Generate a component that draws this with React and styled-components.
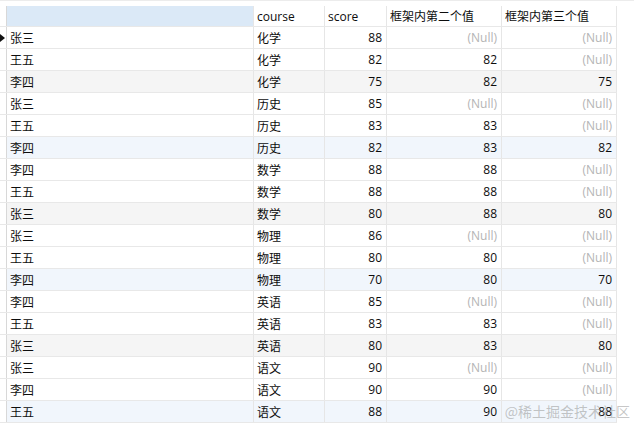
import React from "react";
import styled, { createGlobalStyle } from "styled-components";

const Global = createGlobalStyle`
  html, body { margin: 0; padding: 0; background: #ffffff; }
  body { font-family: "Open Sans", "Noto Sans CJK SC", sans-serif; }
`;

const COLS = "7px 247px 71px 62px 115px 115px";

const Page = styled.div`
  position: relative;
  width: 634px;
  height: 426px;
  overflow: hidden;
  background: #ffffff;
`;

const TopBand = styled.div`
  height: 5px;
  border-top: 1px solid #ececec;
  background: #ffffff;
`;

const Grid = styled.div`
  display: flex;
  flex-direction: column;
  width: 617px;
`;

const Row = styled.div`
  display: grid;
  grid-template-columns: ${COLS};
  height: ${(p) => (p.$header ? 21 : 22)}px;
  box-sizing: border-box;
  border-bottom: 1px solid #e8e8e8;
  background: ${(p) => p.$bg || "#ffffff"};
`;

const Cell = styled.div`
  box-sizing: border-box;
  border-right: 1px solid #e6e6e6;
  padding: 0 4px 0 3px;
  display: flex;
  align-items: center;
  justify-content: ${(p) => (p.$right ? "flex-end" : "flex-start")};
  font-family: "Open Sans", "Noto Sans CJK SC", sans-serif;
  font-size: 12px;
  color: ${(p) => (p.$null ? "#b4b4b4" : "#0d0d0d")};
  background: ${(p) => p.$bg || "transparent"};
  white-space: nowrap;
  overflow: hidden;
`;

const Gutter = styled.div`
  position: relative;
  box-sizing: border-box;
  border-right: 1px solid #d8d8d8;
  background: #ffffff;
`;

const Marker = styled.div`
  position: absolute;
  left: 0;
  top: 7px;
  width: 0;
  height: 0;
  border-top: 4px solid transparent;
  border-bottom: 4px solid transparent;
  border-left: 5px solid #111;
`;

const Watermark = styled.div`
  position: absolute;
  right: 4px;
  bottom: 5px;
  font-family: "Noto Sans CJK SC", sans-serif;
  font-size: 14px;
  color: rgba(150, 150, 150, 0.55);
  pointer-events: none;
`;

const data = [
  ["张三", "化学", 88, null, null],
  ["王五", "化学", 82, 82, null],
  ["李四", "化学", 75, 82, 75],
  ["张三", "历史", 85, null, null],
  ["王五", "历史", 83, 83, null],
  ["李四", "历史", 82, 83, 82],
  ["李四", "数学", 88, 88, null],
  ["王五", "数学", 88, 88, null],
  ["张三", "数学", 80, 88, 80],
  ["张三", "物理", 86, null, null],
  ["王五", "物理", 80, 80, null],
  ["李四", "物理", 70, 80, 70],
  ["李四", "英语", 85, null, null],
  ["王五", "英语", 83, 83, null],
  ["张三", "英语", 80, 83, 80],
  ["张三", "语文", 90, null, null],
  ["李四", "语文", 90, 90, null],
  ["王五", "语文", 88, 90, 88],
];

const rowBg = (i) => {
  if (i % 3 !== 2) return "#ffffff";
  return Math.floor(i / 3) % 2 === 0 ? "#f5f5f5" : "#f1f6fc";
};

const Num = ({ v }) =>
  v === null ? (
    <Cell $right $null>(Null)</Cell>
  ) : (
    <Cell $right>{v}</Cell>
  );

export default function App() {
  return (
    <Page>
      <Global />
      <TopBand />
      <Grid>
        <Row $header>
          <Gutter />
          <Cell $bg="#dbe9f7" />
          <Cell>course</Cell>
          <Cell>score</Cell>
          <Cell>框架内第二个值</Cell>
          <Cell>框架内第三个值</Cell>
        </Row>
        {data.map((r, i) => (
          <Row key={i} $bg={rowBg(i)}>
            <Gutter>{i === 0 && <Marker />}</Gutter>
            <Cell>{r[0]}</Cell>
            <Cell>{r[1]}</Cell>
            <Num v={r[2]} />
            <Num v={r[3]} />
            <Num v={r[4]} />
          </Row>
        ))}
      </Grid>
      <Watermark>@稀土掘金技术社区</Watermark>
    </Page>
  );
}
